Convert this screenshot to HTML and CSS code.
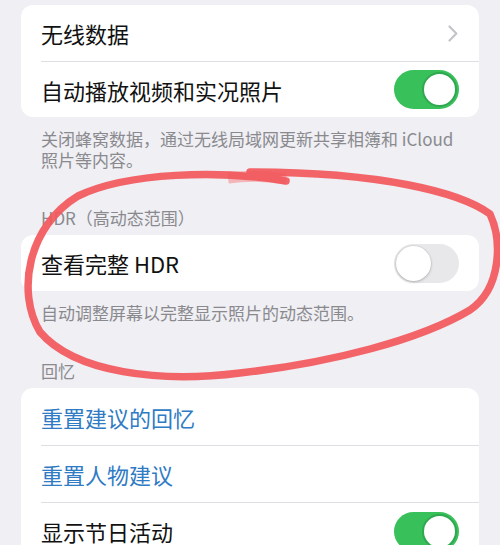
FILE: index.html
```html
<!DOCTYPE html>
<html lang="zh-CN">
<head>
<meta charset="utf-8">
<title>照片设置</title>
<link rel="stylesheet" href="styles.css">
</head>
<body>
<main class="page">
  <section class="group first">
    <div class="card">
      <div class="row">
        <div class="row-inner">
          <span class="label">无线数据</span>
          <svg class="chevron" width="10" height="17" viewBox="0 0 10 17"><path d="M1.5 1.5 L8.3 8.5 L1.5 15.5" fill="none" stroke="#c4c4c8" stroke-width="2.2" stroke-linecap="round" stroke-linejoin="round"/></svg>
        </div>
      </div>
      <div class="row">
        <div class="row-inner">
          <span class="label">自动播放视频和实况照片</span>
          <span class="toggle on"><span class="thumb"></span></span>
        </div>
      </div>
    </div>
    <p class="footer">关闭蜂窝数据，通过无线局域网更新共享相簿和 iCloud<br>照片等内容。</p>
  </section>

  <section class="group">
    <h2 class="header">HDR（高动态范围）</h2>
    <div class="card">
      <div class="row">
        <div class="row-inner">
          <span class="label">查看完整 HDR</span>
          <span class="toggle off"><span class="thumb"></span></span>
        </div>
      </div>
    </div>
    <p class="footer">自动调整屏幕以完整显示照片的动态范围。</p>
  </section>

  <section class="group">
    <h2 class="header">回忆</h2>
    <div class="card tall">
      <div class="row">
        <div class="row-inner"><span class="label link">重置建议的回忆</span></div>
      </div>
      <div class="row">
        <div class="row-inner"><span class="label link">重置人物建议</span></div>
      </div>
      <div class="row">
        <div class="row-inner">
          <span class="label">显示节日活动</span>
          <span class="toggle on"><span class="thumb"></span></span>
        </div>
      </div>
    </div>
  </section>
</main>

<svg class="annotation" viewBox="0 0 500 545" width="500" height="545">
  <path d="M 228 178 C 248 175, 268 176, 286 179" fill="none" stroke="#f58587" stroke-width="11" stroke-linecap="butt" opacity="0.55"/>
  <path d="M 286 181 C 220 170, 128 172, 78 196 C 28 226, 16 292, 40 332 C 75 373, 160 383, 240 373 C 330 363, 420 340, 470 310 C 502 288, 502 240, 490 214 C 460 192, 380 172, 250 172" fill="none" stroke="#f2585b" stroke-width="7.5" stroke-linecap="round" stroke-linejoin="round" opacity="0.92"/>
</svg>
</body>
</html>
```

FILE: styles.css
```css
html, body {
  margin: 0;
  padding: 0;
  overflow: hidden;
}

body {
  background: #efeff4;
  font-family: "Noto Sans CJK SC", "Noto Sans", sans-serif;
  color: #111;
  width: 500px;
  height: 545px;
  position: relative;
}

.page {
  padding: 5px 21px 0;
}

.group + .group {
  margin-top: 37px;
}

.header {
  margin: 0;
  padding: 0 20px 7.5px;
  font-size: 17px;
  font-weight: normal;
  line-height: 21px;
  color: #8a8a8e;
}

.card {
  background: #fff;
  border-radius: 12px;
  overflow: hidden;
}

.row {
  display: flex;
  height: 56px;
  padding-left: 20px;
}

.card.tall .row {
  height: 57px;
}

.row-inner {
  flex: 1;
  display: flex;
  align-items: center;
  justify-content: space-between;
  padding-right: 20px;
}

.row + .row .row-inner {
  border-top: 1px solid #dedee2;
}

.label {
  font-size: 22px;
  line-height: 28px;
  color: #111;
}

.label.link {
  color: #2f7bc4;
}

.chevron {
  margin-right: 1px;
}

.footer {
  margin: 0;
  padding: 10.5px 20px 0;
  font-size: 17px;
  line-height: 21px;
  color: #8a8a8e;
}

.toggle {
  width: 65px;
  height: 39px;
  border-radius: 20px;
  display: flex;
  align-items: center;
  box-sizing: border-box;
  padding: 2px;
}

.toggle.on {
  background: #38c05a;
  justify-content: flex-end;
}

.toggle.off {
  background: #e8e8ea;
  justify-content: flex-start;
}

.thumb {
  width: 35px;
  height: 35px;
  border-radius: 50%;
  background: #fff;
  box-sizing: border-box;
}

.toggle.on .thumb {
  border: 2px solid #2fa84f;
}

.toggle.off .thumb {
  box-shadow: 0 1px 3px rgba(0, 0, 0, 0.22), 0 0 0 0.5px rgba(0, 0, 0, 0.08);
}

.annotation {
  position: absolute;
  left: 0;
  top: 0;
  pointer-events: none;
}
```
